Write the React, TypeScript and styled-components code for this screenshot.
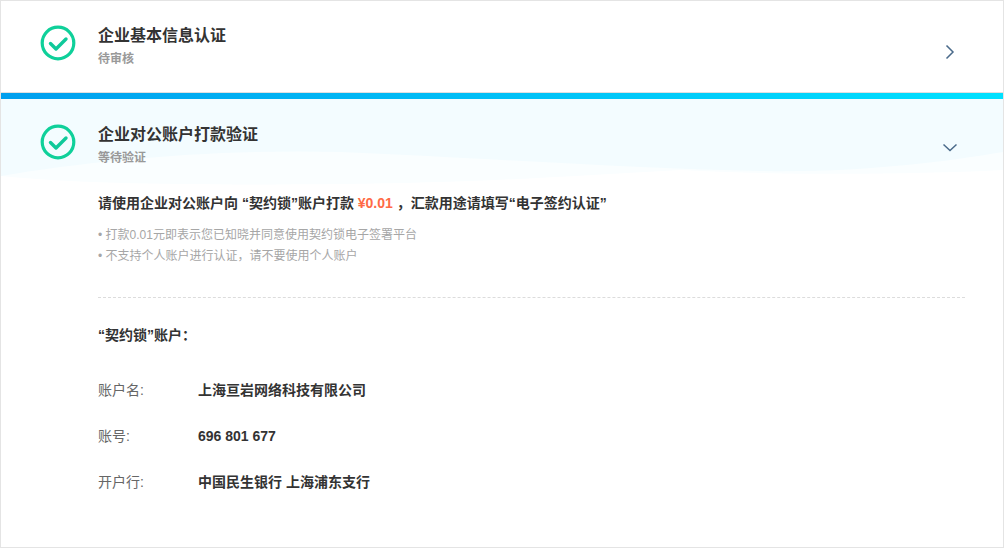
import React from "react";
import styled, { createGlobalStyle } from "styled-components";

const Global = createGlobalStyle`
  html, body { margin: 0; padding: 0; background: #fff; }
  body { font-family: "Liberation Sans", "Noto Sans CJK SC", sans-serif; }
`;

const Frame = styled.div`
  box-sizing: border-box;
  width: 1004px;
  height: 548px;
  border: 1px solid #e4e4e4;
  overflow: hidden;
  display: flex;
  flex-direction: column;
`;

const StepHeader = styled.div`
  box-sizing: border-box;
  height: 92px;
  flex: none;
  display: flex;
  align-items: flex-start;
  padding: 22px 0 0 38px;
  gap: 21px;
  border-bottom: 1px solid #e0e0e0;
`;

const ActiveBar = styled.div`
  height: 6px;
  flex: none;
  background: linear-gradient(90deg, #009fee 0%, #00e1ff 100%);
`;

const ActiveHeader = styled.div`
  position: relative;
  box-sizing: border-box;
  height: 78px;
  flex: none;
  display: flex;
  align-items: flex-start;
  padding: 23px 0 0 38px;
  gap: 21px;
`;

const Wave = styled.svg`
  position: absolute;
  left: 0;
  top: 0;
  width: 1002px;
  height: 91px;
`;

const HeaderText = styled.div`
  position: relative;
  flex: 1;
  display: flex;
  flex-direction: column;
  gap: 2px;
  margin-top: 1px;
`;

const Title = styled.div`
  font-size: 16px;
  line-height: 24px;
  font-weight: 700;
  color: #333;
`;

const Sub = styled.div`
  font-size: 12px;
  line-height: 18px;
  font-weight: 700;
  color: #999;
`;

const IconSvg = styled.svg`
  position: relative;
  flex: none;
  display: block;
  margin-top: 1px;
`;

const Chevron = styled.svg<{ $right: number }>`
  position: relative;
  flex: none;
  display: block;
  margin: 21px ${(p) => p.$right}px 0 0;
`;

const Body = styled.div`
  position: relative;
  padding: 14px 38px 0 97px;
  flex: 1;
`;

const Lead = styled.div`
  font-size: 14px;
  line-height: 24px;
  font-weight: 700;
  color: #333;
`;

const Price = styled.span`
  color: #ff6a45;
`;

const Notes = styled.ul`
  list-style: none;
  margin: 10px 0 0;
  padding: 0;
  font-size: 12px;
  line-height: 21px;
  color: #a6a6a6;
`;

const Divider = styled.div`
  margin-top: 30px;
  border-top: 1px dashed #dcdcdc;
`;

const AccountTitle = styled.div`
  margin-top: 26px;
  font-size: 14px;
  line-height: 22px;
  font-weight: 700;
  color: #333;
`;

const Rows = styled.div`
  margin-top: 33px;
  display: flex;
  flex-direction: column;
  gap: 24px;
`;

const Row = styled.div`
  display: flex;
  font-size: 14px;
  line-height: 22px;
`;

const Label = styled.div`
  width: 100px;
  color: #666;
`;

const Value = styled.div`
  font-weight: 700;
  color: #333;
`;

const Check = () => (
  <IconSvg width="38" height="38" viewBox="0 0 38 38" fill="none">
    <circle cx="19" cy="19" r="15.8" stroke="#0fd09a" strokeWidth="3.2" />
    <path d="M11.5 19.5l5.5 5.5 10-10" stroke="#0fc99a" strokeWidth="3.4" strokeLinecap="round" strokeLinejoin="round" />
  </IconSvg>
);

export default function App() {
  return (
    <Frame>
      <Global />
      <StepHeader>
        <Check />
        <HeaderText>
          <Title>企业基本信息认证</Title>
          <Sub>待审核</Sub>
        </HeaderText>
        <Chevron $right={47} width="12" height="16" viewBox="0 0 12 16" fill="none">
          <path d="M2.5 1.5l6.5 6.5-6.5 6.5" stroke="#4a6a8a" strokeWidth="1.5" />
        </Chevron>
      </StepHeader>
      <ActiveBar />
      <ActiveHeader>
        <Wave viewBox="0 0 1002 91">
          <path d="M0 50H1002V71C900 76 780 76 680 71C560 78 460 84 340 85C220 86 90 86 0 77Z" fill="#fafeff" />
          <path d="M0 0H1002V53C950 62 860 74 760 72C640 70 500 60 340 53C220 50 100 60 0 77Z" fill="#f3fcff" />
        </Wave>
        <Check />
        <HeaderText>
          <Title>企业对公账户打款验证</Title>
          <Sub>等待验证</Sub>
        </HeaderText>
        <Chevron $right={45} width="16" height="10" viewBox="0 0 16 10" fill="none">
          <path d="M1.5 1.5l6.5 6 6.5-6" stroke="#4a6a8a" strokeWidth="1.5" />
        </Chevron>
      </ActiveHeader>
      <Body>
        <Lead>
          请使用企业对公账户向 “契约锁”账户打款 <Price>¥0.01</Price> ，汇款用途请填写“电子签约认证”
        </Lead>
        <Notes>
          <li>• 打款0.01元即表示您已知晓并同意使用契约锁电子签署平台</li>
          <li>• 不支持个人账户进行认证，请不要使用个人账户</li>
        </Notes>
        <Divider />
        <AccountTitle>“契约锁”账户：</AccountTitle>
        <Rows>
          <Row><Label>账户名:</Label><Value>上海亘岩网络科技有限公司</Value></Row>
          <Row><Label>账号:</Label><Value>696 801 677</Value></Row>
          <Row><Label>开户行:</Label><Value>中国民生银行 上海浦东支行</Value></Row>
        </Rows>
      </Body>
    </Frame>
  );
}
